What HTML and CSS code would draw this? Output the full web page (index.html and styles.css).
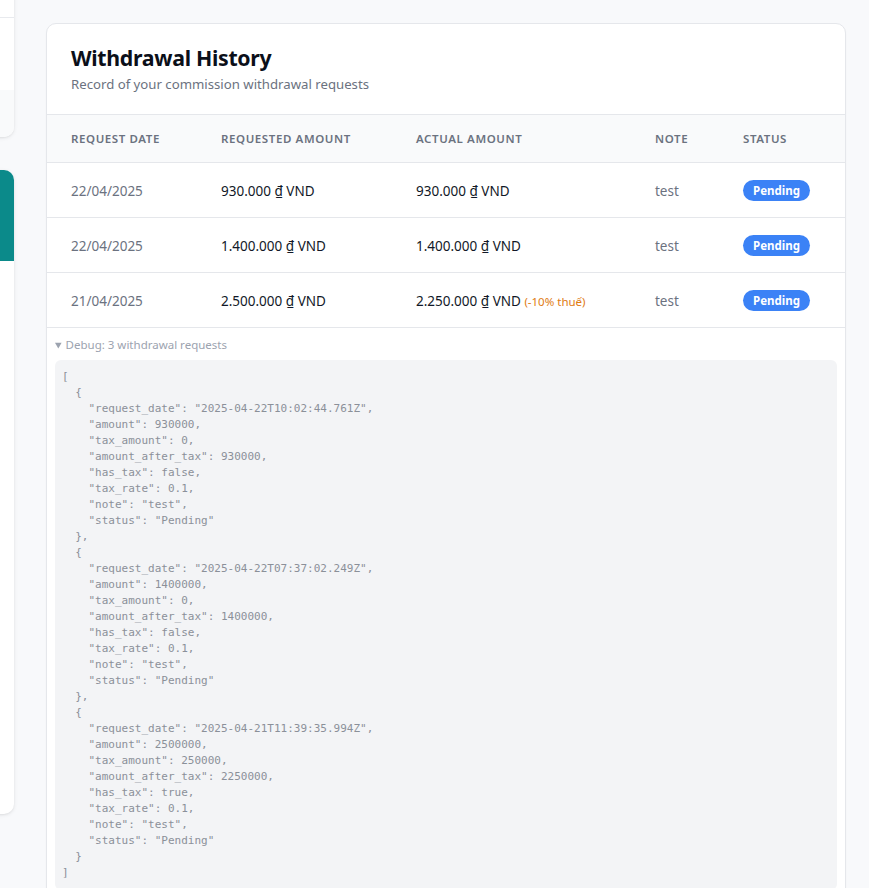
FILE: index.html
```html
<!DOCTYPE html>
<html lang="en">
<head>
<meta charset="utf-8">
<title>Withdrawal History</title>
<link rel="stylesheet" href="styles.css">
</head>
<body>
<div class="layout">
  <aside class="sidebar">
    <div class="side-card side-card-top">
      <div class="side-top-head"></div>
      <div class="side-top-body"></div>
      <div class="side-top-foot"></div>
    </div>
    <div class="side-card side-card-main">
      <div class="side-teal"></div>
      <div class="side-body"></div>
    </div>
  </aside>
  <main class="main">
    <section class="card">
      <header class="card-header">
        <h1 class="title">Withdrawal History</h1>
        <p class="subtitle">Record of your commission withdrawal requests</p>
      </header>
      <div class="table">
        <div class="row head">
          <div>Request Date</div>
          <div>Requested Amount</div>
          <div>Actual Amount</div>
          <div>Note</div>
          <div>Status</div>
        </div>
        <div class="row">
          <div class="muted">22/04/2025</div>
          <div class="strong">930.000 ₫ VND</div>
          <div class="strong">930.000 ₫ VND</div>
          <div class="muted">test</div>
          <div><span class="badge">Pending</span></div>
        </div>
        <div class="row">
          <div class="muted">22/04/2025</div>
          <div class="strong">1.400.000 ₫ VND</div>
          <div class="strong">1.400.000 ₫ VND</div>
          <div class="muted">test</div>
          <div><span class="badge">Pending</span></div>
        </div>
        <div class="row">
          <div class="muted">21/04/2025</div>
          <div class="strong">2.500.000 ₫ VND</div>
          <div class="strong">2.250.000 ₫ VND <span class="tax">(-10% thuế)</span></div>
          <div class="muted">test</div>
          <div><span class="badge">Pending</span></div>
        </div>
      </div>
      <details class="debug" open>
        <summary>Debug: 3 withdrawal requests</summary>
<pre class="json">[
  {
    "request_date": "2025-04-22T10:02:44.761Z",
    "amount": 930000,
    "tax_amount": 0,
    "amount_after_tax": 930000,
    "has_tax": false,
    "tax_rate": 0.1,
    "note": "test",
    "status": "Pending"
  },
  {
    "request_date": "2025-04-22T07:37:02.249Z",
    "amount": 1400000,
    "tax_amount": 0,
    "amount_after_tax": 1400000,
    "has_tax": false,
    "tax_rate": 0.1,
    "note": "test",
    "status": "Pending"
  },
  {
    "request_date": "2025-04-21T11:39:35.994Z",
    "amount": 2500000,
    "tax_amount": 250000,
    "amount_after_tax": 2250000,
    "has_tax": true,
    "tax_rate": 0.1,
    "note": "test",
    "status": "Pending"
  }
]</pre>
      </details>
    </section>
  </main>
</div>
</body>
</html>
```

FILE: styles.css
```css
* { box-sizing: border-box; }
html, body { margin: 0; padding: 0; }
body {
  background: #f8f9fb;
  font-family: "Noto Sans", "Open Sans", sans-serif;
  color: #111827;
  overflow: hidden;
}
.layout {
  display: flex;
  gap: 32px;
  margin-left: -246px;
  align-items: flex-start;
}
.sidebar {
  width: 260px;
  flex: none;
  display: flex;
  flex-direction: column;
  gap: 33px;
  margin-top: -40px;
}
.side-card {
  background: #fff;
  border-radius: 10px;
  box-shadow: 0 1px 4px rgba(0,0,0,0.08), 0 1px 2px rgba(0,0,0,0.05);
  overflow: hidden;
}
.side-top-head {
  height: 58px;
  border-bottom: 1px solid #e8eaee;
}
.side-top-body { height: 72px; }
.side-top-foot {
  height: 47px;
  background: #f9fafb;
}
.side-teal {
  height: 91px;
  background: #0b8a8a;
}
.side-body { height: 553px; }
.main {
  flex: 1;
  padding-top: 23px;
  padding-right: 23px;
}
.card {
  background: #fff;
  border: 1px solid #e5e7eb;
  border-radius: 10px;
  box-shadow: 0 1px 2px rgba(0,0,0,0.03);
  padding-bottom: 24px;
}
.card-header {
  padding: 19px 24px 20px;
  border-bottom: 1px solid #e5e7eb;
}
.title {
  margin: 0;
  font-size: 21.3px;
  line-height: 30px;
  font-weight: 700;
  color: #0b0f19;
  letter-spacing: -0.3px;
}
.subtitle {
  margin: 1px 0 0;
  font-size: 13.2px;
  line-height: 20px;
  color: #6b7280;
}
.row {
  display: grid;
  grid-template-columns: 150px 195px 239px 88px 1fr;
  align-items: center;
  padding-left: 24px;
  height: 55px;
  border-bottom: 1px solid #e5e7eb;
  font-size: 13.5px;
  padding-top: 1px;
}
.row.head {
  height: 48px;
  padding-top: 0;
  background: #f9fafb;
  font-size: 11.5px;
  font-weight: 600;
  letter-spacing: 0.6px;
  text-transform: uppercase;
  color: #6b7280;
}
.muted { color: #6b7280; }
.strong { color: #111827; }
.tax {
  font-size: 11.5px;
  color: #e07b12;
}
.badge {
  display: inline-block;
  background: #3b82f6;
  color: #fff;
  font-size: 11.5px;
  font-weight: 700;
  line-height: 21px;
  padding: 0 10px;
  border-radius: 11px;
}
.debug {
  padding: 9px 8px 0;
}
.debug summary {
  font-size: 11.5px;
  line-height: 16px;
  color: #9ca3af;
  cursor: pointer;
}
.debug summary::marker { font-size: 10px; }
.json {
  margin: 7px 0 0;
  background: #f3f4f6;
  border-radius: 6px;
  padding: 9px 7px;
  font-family: "DejaVu Sans Mono", "Liberation Mono", monospace;
  font-size: 11px;
  line-height: 16px;
  color: #8b9099;
}
```
